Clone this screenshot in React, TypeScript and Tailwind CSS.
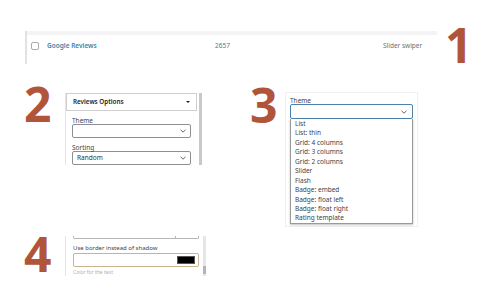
import React from 'react';

const themes = [
  'List',
  'List: thin',
  'Grid: 4 columns',
  'Grid: 3 columns',
  'Grid: 2 columns',
  'Slider',
  'Flash',
  'Badge: embed',
  'Badge: float left',
  'Badge: float right',
  'Rating template',
];

function Chevron() {
  return (
    <svg width="6" height="4" viewBox="0 0 6 4" className="shrink-0">
      <path d="M0.5 0.8 L3 3.2 L5.5 0.8" fill="none" stroke="#50575e" strokeWidth="0.9" />
    </svg>
  );
}

function Digit({ n, className = '' }: { n: string; className?: string }) {
  return (
    <span
      className={`block text-[48px] font-bold leading-[36px] text-[#b0553a] ${className}`}
      style={{ fontFamily: '"Open Sans", "Noto Sans", sans-serif' }}
    >
      {n}
    </span>
  );
}

export default function App() {
  return (
    <div
      className="w-[500px] h-[300px] bg-white overflow-hidden text-[#3c434a]"
      style={{ fontFamily: '"Noto Sans", "Open Sans", sans-serif' }}
    >
      {/* 1: list table row */}
      <div className="flex items-start pt-[27px] pl-[25px]">
        <div className="mt-[4px] w-[412px] h-[33px] border-l-2 border-[#e2e2e2] flex flex-col">
          <div className="h-[4px] bg-[#f4f4f4]" />
          <div className="flex items-center h-[21px] pl-[4px] text-[6.5px]">
            <span className="w-[8px] h-[8px] rounded-[2px] border border-[#a7aaad] bg-white" />
            <span className="ml-[8px] w-[168px] font-semibold text-[#3d7fa6]">Google Reviews</span>
            <span className="w-[168px] text-[#6b7075]">2657</span>
            <span className="text-[#6b7075]">Slider swiper</span>
          </div>
        </div>
        <Digit n="1" className="ml-[8px]" />
      </div>

      {/* 2 + 3 */}
      <div className="flex items-start mt-[28px]">
        <div className="flex items-start w-[240px]">
          <Digit n="2" className="ml-[24px] w-[41px] -mt-[6px]" />
          <div className="w-[137px] h-[72px] flex mt-[1px]">
            <div className="flex-1 border-l border-[#e4e4e4] flex flex-col">
              <div className="h-[19px] border border-[#cfcfcf] flex items-center justify-between px-[6px] bg-white">
                <span className="text-[6.3px] font-semibold text-[#1d2327]">Reviews Options</span>
                <span className="w-0 h-0 border-x-[2px] border-x-transparent border-t-[2.5px] border-t-[#1d2327]" />
              </div>
              <div className="px-[6px] pt-[6px] text-[6.5px]">
                <div className="leading-[7px]">Theme</div>
                <div className="h-[14px] border border-[#8c8f94] rounded-[2px] flex items-center justify-end pr-[4px]">
                  <Chevron />
                </div>
                <div className="mt-[6px] leading-[7px]">Sorting</div>
                <div className="h-[14px] border border-[#8c8f94] rounded-[2px] flex items-center justify-between px-[4px]">
                  <span className="text-[#2c3338]">Random</span>
                  <Chevron />
                </div>
              </div>
            </div>
            <div className="w-[3px] ml-[2px] bg-[#c9c9c9]" />
          </div>
        </div>

        <div className="flex items-start">
          <Digit n="3" className="ml-[10px] w-[35px] -mt-[5px]" />
          <div className="w-[133px] h-[135px] border border-[#f0f0f0] bg-white px-[4px] pt-[4px] text-[6.5px]">
            <div className="leading-[7px]">Theme</div>
            <div className="h-[15px] border border-[#4a82ad] rounded-[2px] flex items-center justify-end pr-[5px]">
              <Chevron />
            </div>
            <div className="w-[123px] border border-[#9a9a9a] border-t-0 bg-white shadow-[0_1px_2px_rgba(0,0,0,0.25)]">
              {themes.map((t) => (
                <div key={t} className="h-[9.45px] leading-[9.45px] pl-[4px] text-[#3c434a]">
                  {t}
                </div>
              ))}
            </div>
          </div>
        </div>
      </div>

      {/* 4 */}
      <div className="flex items-start mt-[9px]">
        <Digit n="4" className="ml-[24px] w-[41px]" />
        <div className="w-[141px] h-[40px] flex">
          <div className="flex-1 border-l border-[#e4e4e4] pl-[7px] pr-[4px] text-[6px] overflow-hidden">
            <div className="h-[3px] border-x border-b border-[#b5b5b5] rounded-b-[2px] flex justify-end">
              <div className="w-[23px] border-l border-[#b5b5b5]" />
            </div>
            <div className="mt-[6px] leading-[7px]">Use border instead of shadow</div>
            <div className="mt-[1px] h-[14px] border border-[#c9b48f] rounded-[2px] flex items-center justify-end pr-[3px]">
              <span className="w-[18px] h-[8px] bg-black border border-[#555]" />
            </div>
            <div className="mt-[2px] leading-[6px] text-[5px] text-[#b0b0b0]">Color for the text</div>
          </div>
          <div className="w-[3px] bg-[#e6e6e6] flex flex-col justify-end">
            <div className="h-[8px] mb-[2px] bg-[#b4b4b4]" />
          </div>
        </div>
      </div>
    </div>
  );
}
